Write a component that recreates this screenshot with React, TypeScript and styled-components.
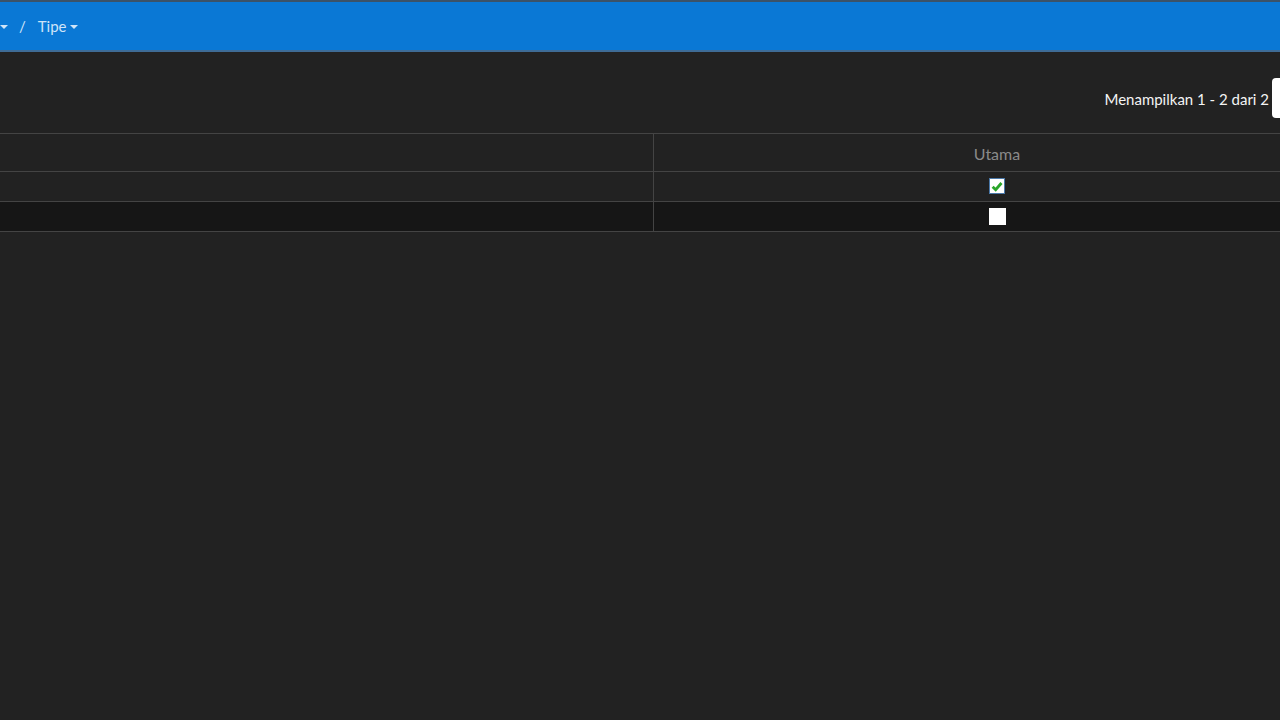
import styled, { createGlobalStyle } from 'styled-components'

const Global = createGlobalStyle`
	html, body {
		margin: 0;
		padding: 0;
		height: 100%;
		overflow: hidden;
		background: #222222;
		font-family: Lato, "Open Sans", sans-serif;
	}
	#root {
		height: 100%;
	}
`

const Page = styled.div`
	width: 1280px;
	height: 720px;
	overflow: hidden;
	background: #222222;
`

const TopBar = styled.header`
	height: 48px;
	box-sizing: content-box;
	border-top: 2px solid #3b5268;
	border-bottom: 2px solid #3f6c96;
	background: #0a78d5;
	display: flex;
	align-items: center;
`

const Crumbs = styled.nav`
	display: flex;
	align-items: center;
	color: #cfe4f8;
	font-size: 15px;
	margin-left: 0;
	margin-top: -1px;
`

const Sep = styled.span`
	margin: 0 12px 0 11px;
`

const Crumb = styled.span`
	display: inline-flex;
	align-items: center;
	gap: 3px;
`

const Caret = styled.span`
	width: 0;
	height: 0;
	border-left: 4.5px solid transparent;
	border-right: 4.5px solid transparent;
	border-top: 4.5px solid #cfe4f8;
	margin-top: 2px;
`

const Content = styled.main`
	width: 1340px;
`

const Toolbar = styled.div`
	height: 81px;
	box-sizing: border-box;
	padding-top: 26px;
	display: flex;
	align-items: flex-start;
	justify-content: flex-end;
	gap: 3px;
`

const Count = styled.span`
	color: #f4f4f4;
	font-size: 15px;
	line-height: 40px;
	margin-top: 1px;
`

const PageSelect = styled.div`
	width: 68px;
	height: 40px;
	background: #ffffff;
	border-radius: 4px 0 0 4px;
`

const Table = styled.div`
	display: grid;
	grid-template-columns: 654px 1fr;
	border-top: 1px solid #444444;
`

const Cell = styled.div<{ $head?: boolean; $dark?: boolean; $first?: boolean }>`
	height: ${({ $head }) => ($head ? '37px' : '29px')};
	border-bottom: 1px solid #444444;
	border-right: ${({ $first }) => ($first ? '1px solid #444444' : 'none')};
	background: ${({ $dark }) => ($dark ? '#161616' : '#222222')};
	display: flex;
	align-items: center;
	justify-content: center;
	color: #8a8a8a;
	font-size: 16px;
`

const UtamaCol = styled.div`
	width: 686px;
	display: flex;
	justify-content: center;
	margin-top: 2px;
`

const Box = styled.span<{ $checked?: boolean }>`
	width: ${({ $checked }) => ($checked ? '14px' : '17px')};
	height: ${({ $checked }) => ($checked ? '14px' : '17px')};
	background: #ffffff;
	border: ${({ $checked }) => ($checked ? '1px solid #4a78a8' : 'none')};
	display: inline-flex;
	align-items: center;
	justify-content: center;
	margin-top: -3px;
`

const rows = [{ checked: true }, { checked: false }]

const App = () => {
	return (
		<Page>
			<Global />
			<TopBar>
				<Crumbs>
					<Caret />
					<Sep>/</Sep>
					<Crumb>
						Tipe
						<Caret />
					</Crumb>
				</Crumbs>
			</TopBar>
			<Content>
				<Toolbar>
					<Count>Menampilkan 1 - 2 dari 2</Count>
					<PageSelect />
				</Toolbar>
				<Table>
					<Cell $head $first />
					<Cell $head>
						<UtamaCol>Utama</UtamaCol>
					</Cell>
					{rows.map((r, i) => [
						<Cell key={`a${i}`} $first $dark={i % 2 === 1} />,
						<Cell key={`b${i}`} $dark={i % 2 === 1}>
							<UtamaCol>
								<Box $checked={r.checked}>
									{r.checked && (
										<svg width="12" height="11" viewBox="0 0 11 10">
											<path d="M1.5 5.2 L4.3 8 L9.6 1.8" fill="none" stroke="#2aa52a" strokeWidth="2.6" />
										</svg>
									)}
								</Box>
							</UtamaCol>
						</Cell>,
					])}
				</Table>
			</Content>
		</Page>
	)
}

export default App
